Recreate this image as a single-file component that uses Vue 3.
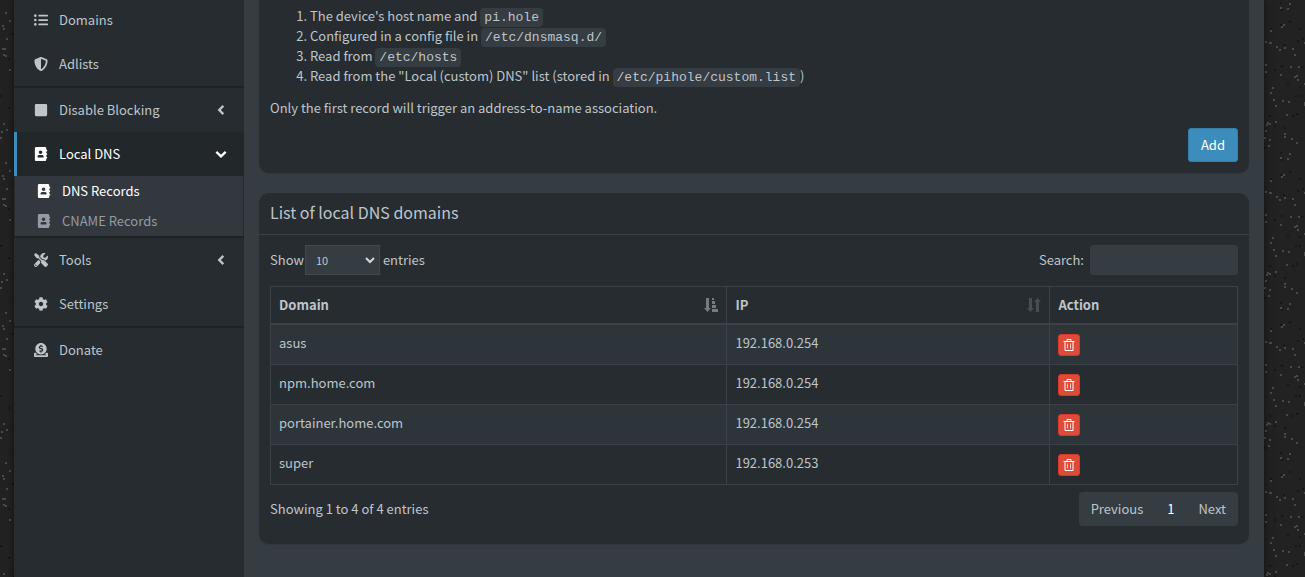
<script setup>
import { ref, computed } from 'vue'

const icons = {
  list: 'M48 48a48 48 0 1 0 48 48 48 48 0 0 0-48-48zm0 160a48 48 0 1 0 48 48 48 48 0 0 0-48-48zm0 160a48 48 0 1 0 48 48 48 48 0 0 0-48-48zm448 16H176a16 16 0 0 0-16 16v32a16 16 0 0 0 16 16h320a16 16 0 0 0 16-16v-32a16 16 0 0 0-16-16zm0-320H176a16 16 0 0 0-16 16v32a16 16 0 0 0 16 16h320a16 16 0 0 0 16-16V80a16 16 0 0 0-16-16zm0 160H176a16 16 0 0 0-16 16v32a16 16 0 0 0 16 16h320a16 16 0 0 0 16-16v-32a16 16 0 0 0-16-16z',
  shield: 'M466.5 83.7l-192-80a48.15 48.15 0 0 0-36.9 0l-192 80C27.7 91.1 16 108.6 16 128c0 198.5 114.5 335.7 221.5 380.3 11.8 4.9 25.1 4.9 36.9 0C360.1 472.6 496 349.3 496 128c0-19.4-11.7-36.9-29.5-44.3zM256.1 446.3l-.1-381 175.9 73.3c-3.3 151.4-82.1 261.1-175.8 307.7z',
  stop: 'M80 32h352c26 0 48 22 48 48v352c0 26-22 48-48 48H80c-26 0-48-22-48-48V80c0-26 22-48 48-48z',
  book: 'M468 160c6.600 0 12-5.400 12-12v-40c0-6.600-5.400-12-12-12h-20V48c0-26.500-21.500-48-48-48H80C53.500 0 32 21.500 32 48v416c0 26.500 21.500 48 48 48h320c26.500 0 48-21.500 48-48v-48h20c6.600 0 12-5.400 12-12v-40c0-6.600-5.400-12-12-12h-20v-64h20c6.600 0 12-5.400 12-12v-40c0-6.600-5.400-12-12-12h-20v-64h20zm-228-32c35.300 0 64 28.700 64 64s-28.700 64-64 64-64-28.700-64-64 28.700-64 64-64zm112 236.800c0 10.600-10 19.200-22.400 19.200H150.400C138 384 128 375.400 128 364.800v-19.200c0-31.800 30.100-57.600 67.200-57.600h5c12.300 5.100 25.700 8 39.800 8s27.600-2.900 39.800-8h5c37.100 0 67.200 25.800 67.200 57.600v19.200z',
  tools: 'M501.1 395.7L384 278.6c-23.1-23.1-57.6-27.6-85.4-13.9L192 158.1V96L64 0 0 64l96 128h62.1l106.6 106.6c-13.6 27.8-9.2 62.3 13.9 85.4l117.1 117.1c14.6 14.6 38.2 14.6 52.7 0l52.7-52.7c14.5-14.6 14.5-38.2 0-52.7zM331.7 225c28.3 0 54.9 11 74.9 31l19.4 19.4c15.8-6.9 30.8-16.5 43.8-29.5 37.1-37.1 49.7-89.3 37.9-136.7-2.2-9-13.5-12.1-20.1-5.5l-74.4 74.4-67.9-11.3L334 98.9l74.4-74.4c6.6-6.6 3.4-17.9-5.7-20.2-47.4-11.7-99.6.9-136.6 37.9-28.5 28.5-41.9 66.1-41.2 103.6l82.1 82.1c8.1-1.9 16.5-2.9 24.7-2.9zm-103.9 82l-56.7-56.7L18.7 402.8c-25 25-25 65.5 0 90.5s65.5 25 90.5 0l123.6-123.6c-7.600-19.9-9.9-41.6-5-62.7zM64 472c-13.2 0-24-10.8-24-24 0-13.3 10.7-24 24-24s24 10.7 24 24c0 13.2-10.7 24-24 24z',
  cog: 'M487.4 315.7l-42.6-24.6c4.3-23.2 4.3-47 0-70.2l42.6-24.6c4.9-2.8 7.1-8.6 5.5-14-11.1-35.6-30-67.8-54.7-94.6-3.8-4.1-10-5.1-14.8-2.3L380.8 110c-17.9-15.4-38.5-27.3-60.8-35.1V25.8c0-5.6-3.9-10.5-9.4-11.7-36.7-8.2-74.3-7.8-109.2 0-5.5 1.2-9.4 6.1-9.4 11.7V75c-22.2 7.9-42.8 19.8-60.8 35.1L88.7 85.5c-4.9-2.8-11-1.9-14.8 2.3-24.7 26.7-43.6 58.9-54.7 94.6-1.7 5.4.6 11.2 5.5 14L67.3 221c-4.3 23.2-4.3 47 0 70.2l-42.6 24.6c-4.9 2.8-7.1 8.6-5.5 14 11.1 35.6 30 67.8 54.7 94.6 3.8 4.1 10 5.1 14.8 2.3l42.6-24.6c17.9 15.4 38.5 27.3 60.8 35.1v49.2c0 5.6 3.9 10.5 9.4 11.7 36.7 8.2 74.3 7.8 109.2 0 5.5-1.2 9.4-6.1 9.4-11.7v-49.2c22.2-7.9 42.8-19.8 60.8-35.1l42.6 24.6c4.9 2.8 11 1.9 14.8-2.3 24.7-26.7 43.6-58.9 54.7-94.6 1.5-5.5-.7-11.3-5.6-14.1zM256 336c-44.1 0-80-35.9-80-80s35.9-80 80-80 80 35.9 80 80-35.9 80-80 80z',
  donate: 'M256 416c114.9 0 208-93.1 208-208S370.9 0 256 0 48 93.1 48 208s93.1 208 208 208zM233.8 97.4V80.6c0-9.2 7.4-16.6 16.6-16.6h11.1c9.2 0 16.6 7.4 16.6 16.6v17c15.5.8 30.5 6.1 43 15.4 5.6 4.1 6.2 12.3 1.2 17.1L306 145.6c-3.8 3.7-9.5 3.8-14 1-5.4-3.4-11.4-5.1-17.8-5.1h-38.9c-9 0-16.3 8.2-16.3 18.3 0 8.2 5 15.5 12.1 17.6l62.3 18.7c25.7 7.7 43.7 32.4 43.7 60.1 0 34-26.4 61.5-59.1 62.4v16.8c0 9.2-7.4 16.6-16.6 16.6h-11.1c-9.2 0-16.6-7.4-16.6-16.6v-17c-15.5-.8-30.5-6.1-43-15.4-5.6-4.1-6.2-12.3-1.2-17.1l16.3-15.5c3.8-3.7 9.5-3.8 14-1 5.4 3.4 11.4 5.1 17.8 5.1h38.9c9 0 16.3-8.2 16.3-18.3 0-8.2-5-15.5-12.1-17.6l-62.3-18.7c-25.7-7.7-43.7-32.4-43.7-60.1.1-34 26.4-61.5 59.1-62.4zM480 352h-32.5c-19.6 26-44.6 47.7-73 64h63.8c5.3 0 9.6 3.6 9.6 8v16c0 4.4-4.3 8-9.6 8H73.600c-5.3 0-9.6-3.6-9.6-8v-16c0-4.4 4.3-8 9.6-8h63.8c-28.4-16.3-53.3-38-73-64H32c-17.7 0-32 14.3-32 32v96c0 17.7 14.3 32 32 32h448c17.7 0 32-14.3 32-32v-96c0-17.7-14.3-32-32-32z'
}

const menu = [
  { label: 'Domains', icon: 'list' },
  { label: 'Adlists', icon: 'shield' },
  { label: 'Disable Blocking', icon: 'stop', arrow: 'left', divided: true },
  {
    label: 'Local DNS', icon: 'book', arrow: 'down', active: true,
    children: [{ label: 'DNS Records', active: true }, { label: 'CNAME Records' }]
  },
  { label: 'Tools', icon: 'tools', arrow: 'left', divided: true },
  { label: 'Settings', icon: 'cog' },
  { label: 'Donate', icon: 'donate', divided: true }
]

const records = [
  { domain: 'asus', ip: '192.168.0.254' },
  { domain: 'npm.home.com', ip: '192.168.0.254' },
  { domain: 'portainer.home.com', ip: '192.168.0.254' },
  { domain: 'super', ip: '192.168.0.253' }
]
const search = ref('')
const size = ref('10')
const rows = computed(() => records.filter(r => (r.domain + ' ' + r.ip).includes(search.value)))

// Speckles of the page backdrop, from a small seeded generator
let seed = 77
const rnd = n => {
  seed = (seed * 16807) % 2147483647
  return seed % n
}
const specks = Array.from({ length: 220 }, (_, i) => ({
  x: rnd(149), y: rnd(149), fill: i % 3 === 0 ? '#171717' : '#4a4a4a'
}))
</script>

<template>
  <div class="page">
    <svg class="backdrop" aria-hidden="true">
      <defs>
        <pattern id="specks" width="150" height="150" patternUnits="userSpaceOnUse">
          <rect v-for="(s, i) in specks" :key="i" :x="s.x" :y="s.y" width="2" height="2" :fill="s.fill" />
        </pattern>
      </defs>
      <rect width="100%" height="100%" fill="url(#specks)" />
    </svg>
    <div class="wrapper">
      <nav class="sidebar" aria-label="Main">
        <ul class="menu">
          <li v-for="m in menu" :key="m.label" :class="{ divided: m.divided }">
            <a href="#" class="item" :class="{ active: m.active }">
              <svg class="icon" viewBox="0 0 512 512" aria-hidden="true"><path :d="icons[m.icon]" /></svg>
              <span class="label">{{ m.label }}</span>
              <svg v-if="m.arrow" class="arrow" viewBox="0 0 12 12" aria-hidden="true">
                <path :d="m.arrow === 'left' ? 'M8 2.500L4.500 6L8 9.500' : 'M2 4.200L6 8L10 4.200'" />
              </svg>
            </a>
            <ul v-if="m.children" class="submenu">
              <li v-for="c in m.children" :key="c.label">
                <a href="#" class="subitem" :class="{ active: c.active }">
                  <svg class="icon" viewBox="0 0 512 512" aria-hidden="true"><path :d="icons.book" /></svg>
                  <span>{{ c.label }}</span>
                </a>
              </li>
            </ul>
          </li>
        </ul>
      </nav>
      <main class="content">
        <section class="box first">
          <ol class="sources">
            <li>The device's host name and <code>pi.hole</code></li>
            <li>Configured in a config file in <code>/etc/dnsmasq.d/</code></li>
            <li>Read from <code>/etc/hosts</code></li>
            <li>Read from the "Local (custom) DNS" list (stored in <code>/etc/pihole/custom.list</code>)</li>
          </ol>
          <p class="note">Only the first record will trigger an address-to-name association.</p>
          <div class="footer"><button type="button" class="add">Add</button></div>
        </section>

        <section class="box">
          <h3 class="title">List of local DNS domains</h3>
          <div class="body">
            <div class="controls">
              <label class="length">Show
                <span class="selectwrap">
                  <select v-model="size">
                    <option>10</option><option>25</option><option>50</option><option>100</option>
                  </select>
                  <svg viewBox="0 0 10 10" aria-hidden="true"><path d="M1 3L5 7L9 3" /></svg>
                </span>
                entries</label>
              <label class="search">Search: <input v-model="search" type="search"></label>
            </div>
            <table>
              <thead>
                <tr>
                  <th class="c1"><div class="head">Domain
                    <svg class="sort on" viewBox="0 0 14 14" aria-hidden="true">
                      <path d="M2 0h3v10h2l-3.500 4L0 10h2zM8 0h2v2H8zM8 3h3v3H8zM8 7h4v3H8zM8 11h6v3H8z" />
                    </svg></div></th>
                  <th class="c2"><div class="head">IP
                    <svg class="sort" viewBox="0 0 14 14" aria-hidden="true">
                      <path d="M2 0h3v10h2l-3.500 4L0 10h2zM9 14h3V4h2l-3.500-4L7 4h2z" />
                    </svg></div></th>
                  <th>Action</th>
                </tr>
              </thead>
              <tbody>
                <tr v-for="r in rows" :key="r.domain">
                  <td>{{ r.domain }}</td>
                  <td>{{ r.ip }}</td>
                  <td>
                    <button type="button" class="trash" :aria-label="'Delete ' + r.domain">
                      <svg viewBox="0 0 12 12" aria-hidden="true">
                        <path d="M.5 2.500h11M4 2V.5h4V2M2 3v8.500h8V3" />
                        <path class="slats" d="M4.500 4.500v5M7.500 4.500v5" />
                      </svg>
                    </button>
                  </td>
                </tr>
              </tbody>
            </table>
            <div class="bottom">
              <span class="info">Showing 1 to 4 of 4 entries</span>
              <div class="pager">
                <button type="button">Previous</button>
                <button type="button" class="current">1</button>
                <button type="button">Next</button>
              </div>
            </div>
          </div>
        </section>
      </main>
    </div>
  </div>
</template>

<style>
body {
  background: #222;
}
</style>

<style scoped>
.page {
  position: relative;
  min-height: 100vh;
  display: flex;
  overflow: hidden;
  font: 13px/20px "Noto Sans CJK SC", "Noto Sans", sans-serif;
  color: #bec5cb;
}
.page * { box-sizing: border-box; }
.backdrop {
  position: absolute;
  inset: 0;
  width: 100%;
  height: 100%;
}
.wrapper {
  position: relative;
  flex: 1;
  display: flex;
  margin: 0 41px 0 14px;
  background: #353c42;
  box-shadow: 0 0 8px rgba(0, 0, 0, 0.5);
}
ul, ol { margin: 0; padding: 0; }
ul { list-style: none; }
.sidebar {
  flex: 0 0 230px;
  background: #272c30;
}
.menu { margin-top: -2px; }
.divided { border-top: 2px solid #1f2225; }
.item {
  display: flex;
  align-items: center;
  height: 44px;
  padding: 0 16px 0 17px;
  border-left: 3px solid transparent;
  color: #bec5cb;
  text-decoration: none;
}
.item.active {
  background: #222729;
  border-left-color: #3c8dbc;
  color: #fff;
}
.icon {
  width: 14px;
  height: 14px;
  margin-right: 11px;
  fill: currentColor;
}
.label { flex: 1; }
.arrow {
  width: 14px;
  height: 14px;
  fill: none;
  stroke: currentColor;
  stroke-width: 2;
}
.submenu {
  margin: 0 1px;
  background: #32383e;
}
.subitem {
  display: flex;
  align-items: center;
  height: 30px;
  padding-left: 22px;
  color: #949ba2;
  text-decoration: none;
}
.subitem.active { color: #fff; }
.content {
  flex: 1;
  padding: 0 15px 32px;
}
.box {
  margin-bottom: 20px;
  background: #272c30;
  border-radius: 10px;
  box-shadow: 0 1px 1px rgba(0, 0, 0, 0.1);
}
.box.first {
  border-radius: 0 0 10px 10px;
  padding: 6px 11px 11px;
}
.sources {
  padding-left: 40px;
}
code {
  padding: 2px 4px;
  border-radius: 4px;
  background: #353c42;
  font: 13px "Liberation Mono", monospace;
}
.note { margin: 12px 0 10px; }
.footer {
  display: flex;
  justify-content: flex-end;
}
button {
  font: inherit;
  cursor: pointer;
}
.add {
  padding: 6px 12px;
  border: 1px solid #367fa9;
  border-radius: 3px;
  background: #3c8dbc;
  color: #fff;
}
.title {
  margin: 0;
  padding: 9px 11px 12px;
  border-bottom: 1px solid #3a4148;
  font-size: 16px;
  line-height: 20px;
  font-weight: 400;
}
.body { padding: 10px 11px 18px; }
.controls {
  display: flex;
  justify-content: space-between;
  margin-bottom: 11px;
}
.length, .search {
  display: flex;
  align-items: center;
}
.selectwrap {
  position: relative;
  width: 75px;
  margin: 0 3px 0 1px;
}
select, input {
  display: block;
  height: 30px;
  border: 1px solid #41484f;
  background: #353c42;
  color: #bec5cb;
  font: 11px/18px "Noto Sans CJK SC", "Noto Sans", sans-serif;
}
select {
  width: 100%;
  padding: 0 10px;
  appearance: none;
}
.selectwrap svg {
  position: absolute;
  right: 5px;
  top: 10px;
  width: 10px;
  height: 10px;
  fill: none;
  stroke: #d5dadf;
  stroke-width: 2;
  pointer-events: none;
}
input {
  width: 148px;
  margin-left: 6px;
  padding: 0 10px;
  border-color: #373e45;
  border-radius: 3px;
}
table {
  width: 100%;
  border-collapse: collapse;
  table-layout: fixed;
}
th, td {
  height: 40px;
  padding: 8px;
  border: 1px solid #3a4148;
  text-align: left;
  vertical-align: top;
}
th {
  height: 37px;
  border-bottom-width: 2px;
}
.c1 { width: 47.2%; }
.c2 { width: 33.4%; }
.head {
  display: flex;
  justify-content: space-between;
  align-items: center;
}
.sort {
  width: 14px;
  height: 14px;
  fill: #464d54;
}
.sort.on { fill: #747b81; }
tbody tr:nth-child(odd) { background: #2d343a; }
.trash {
  display: block;
  width: 22px;
  height: 22px;
  margin-top: 1px;
  padding: 4px;
  border: 1px solid #d73925;
  border-radius: 3px;
  background: #dd4b39;
}
.trash svg {
  display: block;
  width: 12px;
  height: 12px;
  fill: none;
  stroke: #fff;
}
.slats { opacity: 0.7; }
.bottom {
  display: flex;
  justify-content: space-between;
  align-items: center;
  margin-top: 7px;
}
.pager {
  display: flex;
  border-radius: 4px;
  background: #353c42;
}
.pager button {
  height: 34px;
  padding: 0 12px;
  border: 0;
  background: none;
  color: #bec5cb;
}
.pager .current { color: #fff; }
</style>
